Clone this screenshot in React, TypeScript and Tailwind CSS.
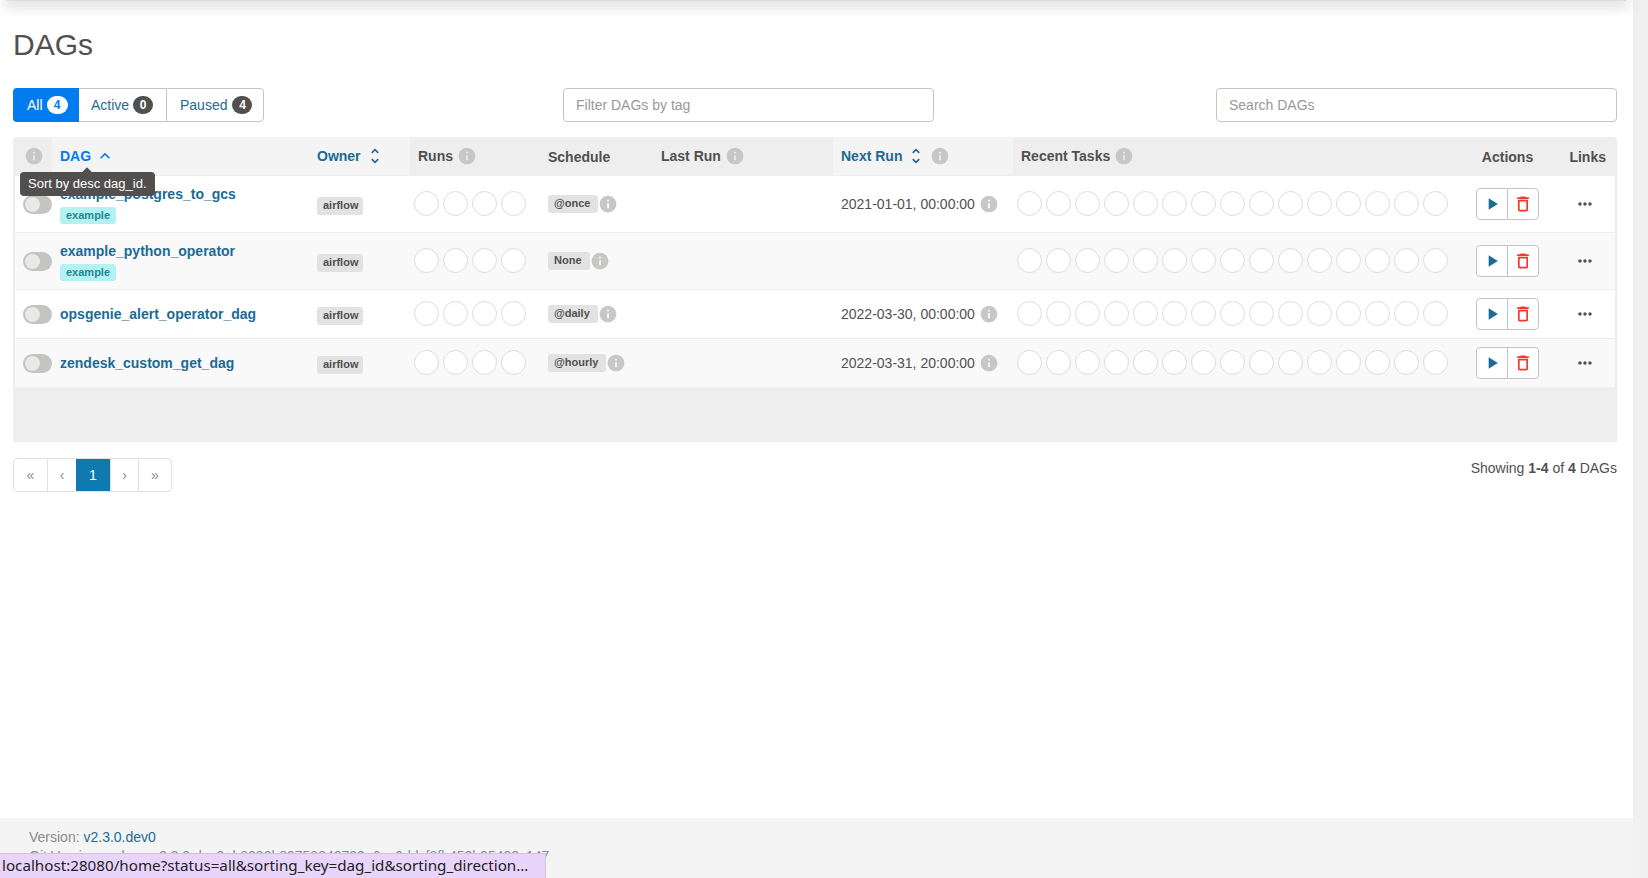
import type { ReactNode } from 'react';

interface DagRow {
    name: string;
    tag?: string;
    schedule: string;
    nextRun?: string;
    height: string;
    striped: boolean;
}

const dags: DagRow[] = [
    { name: 'example_postgres_to_gcs', tag: 'example', schedule: '@once', nextRun: '2021-01-01, 00:00:00', height: 'h-[57px]', striped: false },
    { name: 'example_python_operator', tag: 'example', schedule: 'None', height: 'h-[57px]', striped: true },
    { name: 'opsgenie_alert_operator_dag', schedule: '@daily', nextRun: '2022-03-30, 00:00:00', height: 'h-[49px]', striped: false },
    { name: 'zendesk_custom_get_dag', schedule: '@hourly', nextRun: '2022-03-31, 20:00:00', height: 'h-[49px]', striped: true },
];

const InfoIcon = () => (
    <svg viewBox="0 0 24 24" className="h-5 w-5 shrink-0 fill-[#c7c7c6]">
        <path d="M12 2C6.48 2 2 6.48 2 12s4.48 10 10 10 10-4.48 10-10S17.52 2 12 2zm1 15h-2v-6h2v6zm0-8h-2V7h2v2z" />
    </svg>
);

const UnfoldIcon = () => (
    <svg viewBox="0 0 24 24" className="h-5 w-5 shrink-0 fill-[#1d6a93]">
        <path d="M12 5.83L15.17 9l1.41-1.41L12 3 7.41 7.59 8.83 9 12 5.83zm0 12.34L8.83 15l-1.41 1.41L12 21l4.59-4.59L15.17 15 12 18.17z" />
    </svg>
);

const Circles = ({ count }: { count: number }) => (
    <div className="flex gap-1">
        {Array.from({ length: count }).map((_, index) => (
            <div key={index} className="h-[25px] w-[25px] rounded-full border border-[#dcdcdc] bg-white"></div>
        ))}
    </div>
);

const Badge = ({ children, wide }: { children: ReactNode; wide?: boolean }) => (
    <span
        className={`inline-block h-[18px] rounded-[3px] bg-[#e2e2e2] pl-[6px] text-[11px] font-bold leading-[17px] text-[#51504f] ${
            wide ? 'pr-2' : 'pr-[5px]'
        }`}
    >
        {children}
    </span>
);

const CountPill = ({ count, active }: { count: number; active?: boolean }) => (
    <span
        className={
            active
                ? 'flex h-[18px] w-[21px] items-center justify-center rounded-full bg-white text-xs font-bold text-[#017cee]'
                : 'flex h-[18px] w-5 items-center justify-center rounded-full bg-[#51504f] text-xs font-bold text-white'
        }
    >
        {count}
    </span>
);

const PageLink = ({ children, width, active }: { children: ReactNode; width: string; active?: boolean }) => (
    <div
        className={`flex h-full items-center justify-center ${width} ${
            active ? 'bg-[#107ab0] text-white' : 'border-l border-[#e2e2e2] text-[#8a8a8a] first:border-l-0'
        }`}
    >
        {children}
    </div>
);

export default function App() {
    return (
        <div className="flex h-screen overflow-hidden bg-white font-['Liberation_Sans',Arial,sans-serif] text-sm text-[#51504f]">
            <div className="relative flex min-w-0 flex-1 flex-col">
                {/* Navbar sits above the scroll position, only its shadow shows */}
                <div className="mx-[7px] h-px shrink-0 bg-[#dddddd] shadow-[0_1px_14px_3px_rgba(0,0,0,0.22)]"></div>

                <div className="flex-1 pl-[13px] pr-4">
                    <h1 className="mt-[27px] text-[30px] font-normal leading-[33px]">DAGs</h1>

                    {/* Filters */}
                    <div className="mt-[27px] flex h-[34px] items-stretch">
                        <div className="flex w-[251px] shrink-0">
                            <div className="flex w-[66px] shrink-0 items-center gap-1 rounded-l bg-[#017cee] pl-[14px] text-white">
                                All
                                <CountPill count={4} active />
                            </div>
                            <div className="flex w-[87px] shrink-0 items-center gap-1 border-y border-[#c4c4c3] pl-3 text-[#1d6a93]">
                                Active
                                <CountPill count={0} />
                            </div>
                            <div className="flex w-[98px] shrink-0 items-center gap-[5px] rounded-r border border-[#c4c4c3] pl-[13px] text-[#1d6a93]">
                                Paused
                                <CountPill count={4} />
                            </div>
                        </div>
                        <input
                            className="ml-[299px] w-[371px] rounded border border-[#c4c4c3] px-3 placeholder:text-[#999]"
                            placeholder="Filter DAGs by tag"
                        />
                        <input
                            className="ml-auto w-[401px] rounded border border-[#c4c4c3] px-3 placeholder:text-[#999]"
                            placeholder="Search DAGs"
                        />
                    </div>

                    {/* DAG table */}
                    <div className="relative mt-[15px] rounded-t bg-[#eeeeee] px-[2px] pb-[55px]">
                        <table className="w-full table-fixed border-collapse">
                            <colgroup>
                                <col className="w-[37px]" />
                                <col className="w-[257px]" />
                                <col className="w-[101px]" />
                                <col className="w-[129px]" />
                                <col className="w-[114px]" />
                                <col className="w-[180px]" />
                                <col className="w-[180px]" />
                                <col className="w-[455px]" />
                                <col className="w-[79px]" />
                                <col className="w-[68px]" />
                            </colgroup>
                            <thead>
                                <tr className="h-[38px] text-left font-bold">
                                    <th className="bg-[#eeeeee] pl-[9px]">
                                        <InfoIcon />
                                    </th>
                                    <th className="bg-[#f4f4f4] pl-2">
                                        <div className="flex items-center gap-1 text-[#017cee]">
                                            DAG
                                            <svg viewBox="0 0 24 24" className="h-5 w-5 fill-[#017cee]">
                                                <path d="M12 8l-6 6 1.41 1.41L12 10.83l4.59 4.58L18 14z" />
                                            </svg>
                                        </div>
                                    </th>
                                    <th className="bg-[#f4f4f4] pl-2">
                                        <div className="flex items-center gap-1 text-[#1d6a93]">
                                            Owner
                                            <UnfoldIcon />
                                        </div>
                                    </th>
                                    <th className="bg-[#eeeeee] pl-2">
                                        <div className="flex items-center gap-1">
                                            Runs
                                            <InfoIcon />
                                        </div>
                                    </th>
                                    <th className="bg-[#eeeeee] pl-[9px] pt-[2px]">Schedule</th>
                                    <th className="bg-[#eeeeee] pl-2">
                                        <div className="flex items-center gap-1">
                                            Last Run
                                            <InfoIcon />
                                        </div>
                                    </th>
                                    <th className="bg-[#f4f4f4] pl-2">
                                        <div className="flex items-center gap-1 text-[#1d6a93]">
                                            Next Run
                                            <UnfoldIcon />
                                            <InfoIcon />
                                        </div>
                                    </th>
                                    <th className="bg-[#eeeeee] pl-2">
                                        <div className="flex items-center gap-1">
                                            Recent Tasks
                                            <InfoIcon />
                                        </div>
                                    </th>
                                    <th className="bg-[#eeeeee] pt-[2px] text-center">Actions</th>
                                    <th className="bg-[#eeeeee] pr-[9px] pt-[2px] text-right">Links</th>
                                </tr>
                            </thead>
                            <tbody>
                                {dags.map((dag) => (
                                    <tr
                                        key={dag.name}
                                        className={`${dag.height} border-t border-[#eeeeee] ${dag.striped ? 'bg-[#f9f9f9]' : 'bg-white'}`}
                                    >
                                        <td className="pl-2 pt-[2px]">
                                            <div className="flex h-[19px] w-[29px] items-center rounded-full bg-[#c4c4c3] pl-[2px]">
                                                <div className="h-[15px] w-[15px] rounded-full bg-[#e9e9e9]"></div>
                                            </div>
                                        </td>
                                        <td className={dag.tag ? 'pl-2 pt-px' : 'pl-2'}>
                                            <div className="text-sm font-bold leading-[18px] text-[#1d6a93]">{dag.name}</div>
                                            {dag.tag && (
                                                <span className="mt-1 inline-block h-[17px] rounded-[3px] bg-[#b6f1f2] px-[6px] text-[11px] font-bold leading-[17px] text-[#1a8a8f]">
                                                    {dag.tag}
                                                </span>
                                            )}
                                        </td>
                                        <td className="pl-2 pt-[2px]">
                                            <Badge>airflow</Badge>
                                        </td>
                                        <td className="pl-1">
                                            <Circles count={4} />
                                        </td>
                                        <td className="pl-[9px]">
                                            <div className="flex items-center">
                                                <Badge wide>{dag.schedule}</Badge>
                                                <InfoIcon />
                                            </div>
                                        </td>
                                        <td></td>
                                        <td className="pl-2">
                                            {dag.nextRun && (
                                                <div className="flex items-center gap-1">
                                                    {dag.nextRun}
                                                    <InfoIcon />
                                                </div>
                                            )}
                                        </td>
                                        <td className="pl-1">
                                            <Circles count={15} />
                                        </td>
                                        <td>
                                            <div className="mx-auto flex h-8 w-[63px] overflow-hidden rounded border border-[#c4c4c3] bg-white">
                                                <div className="flex flex-1 items-center justify-center border-r border-[#c4c4c3]">
                                                    <svg viewBox="0 0 24 24" className="h-5 w-5 fill-[#1d6a93]">
                                                        <path d="M8 5v14l11-7z" />
                                                    </svg>
                                                </div>
                                                <div className="flex flex-1 items-center justify-center">
                                                    <svg viewBox="0 0 24 24" className="h-5 w-5 fill-[#f5362b]">
                                                        <path d="M6 19c0 1.1.9 2 2 2h8c1.1 0 2-.9 2-2V7H6v12zM8 9h8v10H8V9zm7.5-5l-1-1h-5l-1 1H5v2h14V4z" />
                                                    </svg>
                                                </div>
                                            </div>
                                        </td>
                                        <td className="pl-[28px]">
                                            <svg viewBox="0 0 24 24" className="h-5 w-5 fill-[#51504f]">
                                                <path d="M6 10c-1.1 0-2 .9-2 2s.9 2 2 2 2-.9 2-2-.9-2-2-2zm12 0c-1.1 0-2 .9-2 2s.9 2 2 2 2-.9 2-2-.9-2-2-2zm-6 0c-1.1 0-2 .9-2 2s.9 2 2 2 2-.9 2-2-.9-2-2-2z" />
                                            </svg>
                                        </td>
                                    </tr>
                                ))}
                            </tbody>
                        </table>

                        {/* Sort tooltip */}
                        <div className="absolute left-[7px] top-[35px] rounded bg-[#51504f] px-2 py-[5px] text-[13px] leading-[14px] text-white">
                            <div className="absolute left-[63px] top-[-3px] h-2 w-2 rotate-45 bg-[#51504f]"></div>
                            <span className="relative">Sort by desc dag_id.</span>
                        </div>
                    </div>

                    {/* Pagination */}
                    <div className="mt-4 flex items-start justify-between">
                        <div className="flex h-[34px] overflow-hidden rounded border border-[#e2e2e2] bg-white">
                            <PageLink width="w-[33px]">«</PageLink>
                            <PageLink width="w-[29px]">‹</PageLink>
                            <PageLink width="w-[34px]" active>1</PageLink>
                            <PageLink width="w-[28px]">›</PageLink>
                            <PageLink width="w-[33px]">»</PageLink>
                        </div>
                        <div className="leading-5">
                            Showing <b>1-4</b> of <b>4</b> DAGs
                        </div>
                    </div>
                </div>

                {/* Footer */}
                <footer className="h-[60px] shrink-0 bg-[#f4f4f4] pl-[29px] pt-[10px] leading-[19px] text-[#8a8a8a]">
                    <div>
                        Version: <span className="text-[#1d6a93]">v2.3.0.dev0</span>
                    </div>
                    <div className="whitespace-nowrap">
                        Git Version: .release:2.3.0.dev0+b8282b89758840722a6ac9ddcf8fb452b35492c147
                    </div>
                </footer>

                {/* Browser status bubble */}
                <div className="absolute bottom-0 left-0 flex h-[25px] w-[546px] items-center overflow-hidden whitespace-nowrap border-r border-t border-[#cfc4da] bg-[#e9d5fb] pl-[2px] font-['Noto_Sans',sans-serif] text-[15.2px] text-[#222222]">
                    localhost:28080/home?status=all&amp;sorting_key=dag_id&amp;sorting_direction…
                </div>
            </div>

            {/* Scrollbar track */}
            <div className="w-[15px] shrink-0 bg-[#f0f0f0]"></div>
        </div>
    );
}
